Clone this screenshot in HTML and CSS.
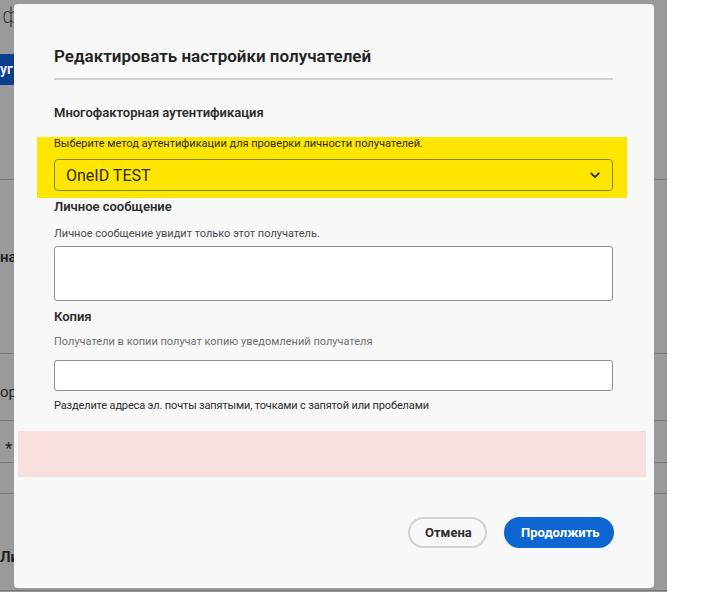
FILE: index.html
```html
<!DOCTYPE html>
<html lang="ru">
<head>
<meta charset="utf-8">
<title>Редактировать настройки получателей</title>
<link rel="stylesheet" href="styles.css">
</head>
<body>
<div class="screen">
  <div class="backdrop">
    <div class="under">
      <div class="u-top">
        <span class="u-glyph">ф</span>
        <span class="u-btn">уг</span>
      </div>
      <div class="u-row u-r1"><span class="u-text">нал</span></div>
      <div class="u-row u-r2"><span class="u-text u-light">ор</span></div>
      <div class="u-row u-r3"><span class="u-text u-star">*</span></div>
      <div class="u-row u-r4"></div>
      <div class="u-row u-r5"><span class="u-text u-bold">Ли</span></div>
    </div>

    <div class="modal">
      <h1 class="title">Редактировать настройки получателей</h1>
      <div class="divider"></div>

      <h2 class="section">Многофакторная аутентификация</h2>
      <div class="highlight">
        <p class="hint hint-dark">Выберите метод аутентификации для проверки личности получателей.</p>
        <div class="select">
          <span class="select-value">OneID TEST</span>
          <svg class="chevron" width="10" height="7" viewBox="0 0 10 7"><path d="M1.2 1.4 L5 5.2 L8.8 1.4" fill="none" stroke="#2b2b10" stroke-width="1.8" stroke-linecap="round" stroke-linejoin="round"/></svg>
        </div>
      </div>

      <h2 class="section s-msg">Личное сообщение</h2>
      <p class="hint hint-mid">Личное сообщение увидит только этот получатель.</p>
      <div class="textarea"></div>

      <h2 class="section s-copy">Копия</h2>
      <p class="hint hint-gray">Получатели в копии получат копию уведомлений получателя</p>
      <div class="input"></div>
      <p class="hint hint-note">Разделите адреса эл. почты запятыми, точками с запятой или пробелами</p>

      <div class="error-box"></div>

      <div class="actions">
        <button class="btn btn-secondary">Отмена</button>
        <button class="btn btn-primary">Продолжить</button>
      </div>
    </div>
  </div>
  <div class="outside"></div>
</div>
</body>
</html>
```

FILE: styles.css
```css
* { box-sizing: border-box; }

html, body {
  margin: 0;
  padding: 0;
}

body {
  font-family: Roboto, "Noto Sans", sans-serif;
  color: #2c2c2c;
  background: #ffffff;
}

.screen {
  display: flex;
  width: 728px;
  height: 592px;
  overflow: hidden;
}

.backdrop {
  position: relative;
  width: 667px;
  height: 592px;
  background: #9a9a9a;
  flex: none;
}

.outside {
  flex: 1;
  background: #ffffff;
}

/* underlying page, dimmed */
.under {
  display: flex;
  flex-direction: column;
  width: 667px;
}

.u-top {
  height: 180px;
  border-bottom: 1px solid #777;
  display: flex;
  flex-direction: column;
  align-items: flex-start;
}

.u-glyph {
  font-family: "DejaVu Sans", sans-serif;
  font-weight: 300;
  font-size: 21px;
  line-height: 28px;
  color: #2a2a2a;
  margin: 2px 0 0 2px;
}

.u-btn {
  margin-top: 24px;
  width: 60px;
  height: 31px;
  background: #0b3e8e;
  color: #e8eef8;
  font-weight: 700;
  font-size: 14px;
  line-height: 31px;
  padding-left: 0;
  white-space: nowrap;
}

.u-row {
  border-bottom: 1px solid #777;
  display: flex;
  align-items: center;
}

.u-r1 { height: 174px; }
.u-r2 { height: 67px; }
.u-r3 { height: 42px; align-items: flex-end; padding-bottom: 4px; }
.u-r4 { height: 31px; }
.u-r5 { height: 97px; align-items: flex-end; padding-bottom: 24px; }

.u-text {
  font-size: 15px;
  font-weight: 600;
  color: #1f1f1f;
  white-space: nowrap;
  margin-left: 0;
}

.u-r1 .u-text { margin-top: -20px; }
.u-r2 .u-text { font-weight: 400; margin-top: 10px; }
.u-star { font-size: 17px; font-weight: 400; margin-left: 5px; }
.u-bold { font-weight: 700; }

/* modal */
.modal {
  position: absolute;
  left: 14px;
  top: 4px;
  width: 640px;
  height: 584px;
  background: #f8f8f8;
  border-radius: 4px;
  padding: 40px 41px 0 40px;
  display: flex;
  flex-direction: column;
}

.title {
  margin: 0;
  font-size: 17px;
  line-height: 24px;
  font-weight: 600;
  color: #222;
}

.divider {
  margin-top: 10px;
  height: 2px;
  background: #d3d3d3;
}

.section {
  margin: 24px 0 0;
  font-size: 13px;
  line-height: 18px;
  font-weight: 600;
  color: #2c2c2c;
}

.s-msg { margin-top: 0; }
.s-copy { margin-top: 7px; }

.hint {
  margin: 0;
  font-size: 11px;
  line-height: 14px;
}

.hint-dark { color: #2b2b10; }
.hint-mid { margin-top: 11px; color: #4a4a4a; }
.hint-gray { margin-top: 9px; color: #6e6e6e; }
.hint-note { margin-top: 8px; color: #2c2c2c; letter-spacing: -0.15px; }

.highlight {
  margin: 15px -14px 0 -17px;
  padding: 0 14px 7px 17px;
  background: #ffe600;
}

.select {
  margin-top: 8px;
  height: 32px;
  border: 1px solid #85851c;
  border-radius: 4px;
  display: flex;
  align-items: center;
  justify-content: space-between;
  padding: 0 11px 0 11px;
}

.select-value {
  font-size: 16px;
  color: #2a2a10;
}

.chevron { margin-right: 1px; }

.textarea {
  margin-top: 5px;
  height: 55px;
  background: #fff;
  border: 1px solid #8e8e8e;
  border-radius: 3px;
}

.input {
  margin-top: 11px;
  height: 31px;
  background: #fff;
  border: 1px solid #8e8e8e;
  border-radius: 3px;
}

.error-box {
  margin: 18px -33px 0 -36px;
  height: 46px;
  background: #f7dfdf;
}

.actions {
  margin-top: 40px;
  display: flex;
  justify-content: flex-end;
  gap: 17px;
  margin-right: -1px;
}

.btn {
  height: 31px;
  border-radius: 16px;
  font-family: inherit;
  font-size: 13px;
  font-weight: 700;
  padding: 0 15px;
  cursor: pointer;
}

.btn-secondary {
  width: 79px;
  background: #f8f8f8;
  border: 2px solid #d2d2d2;
  color: #2c2c2c;
}

.btn-primary {
  width: 110px;
  background: #0d66d0;
  border: 2px solid #0d66d0;
  color: #ffffff;
}
```
